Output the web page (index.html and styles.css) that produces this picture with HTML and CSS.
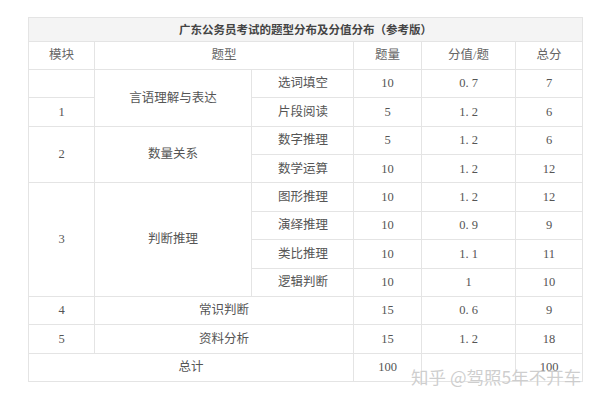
FILE: index.html
```html
<!DOCTYPE html>
<html lang="zh">
<head>
<meta charset="utf-8">
<link rel="stylesheet" href="styles.css">
</head>
<body>
<div class="wrap">
<table class="score">
  <colgroup>
    <col class="c1"><col class="c2"><col class="c3"><col class="c4"><col class="c5"><col class="c6">
  </colgroup>
  <tr class="title"><th colspan="6">广东公务员考试的题型分布及分值分布（参考版）</th></tr>
  <tr class="head"><td>模块</td><td colspan="2">题型</td><td>题量</td><td>分值/题</td><td>总分</td></tr>
  <tr><td></td><td rowspan="2">言语理解与表达</td><td class="left">选词填空</td><td>10</td><td>0. 7</td><td>7</td></tr>
  <tr><td>1</td><td class="left">片段阅读</td><td>5</td><td>1. 2</td><td>6</td></tr>
  <tr><td rowspan="2">2</td><td rowspan="2">数量关系</td><td class="left">数字推理</td><td>5</td><td>1. 2</td><td>6</td></tr>
  <tr><td class="left">数学运算</td><td>10</td><td>1. 2</td><td>12</td></tr>
  <tr><td rowspan="4">3</td><td rowspan="4">判断推理</td><td class="left">图形推理</td><td>10</td><td>1. 2</td><td>12</td></tr>
  <tr><td class="left">演绎推理</td><td>10</td><td>0. 9</td><td>9</td></tr>
  <tr><td class="left">类比推理</td><td>10</td><td>1. 1</td><td>11</td></tr>
  <tr><td class="left">逻辑判断</td><td>10</td><td>1</td><td>10</td></tr>
  <tr><td>4</td><td colspan="2">常识判断</td><td>15</td><td>0. 6</td><td>9</td></tr>
  <tr><td>5</td><td colspan="2">资料分析</td><td>15</td><td>1. 2</td><td>18</td></tr>
  <tr><td colspan="3">总计</td><td>100</td><td></td><td>100</td></tr>
</table>
<div class="mark">知乎 @驾照5年不开车</div>
</div>
</body>
</html>
```
FILE: styles.css
```css
html, body {
  margin: 0;
  padding: 0;
  background: #fff;
}
.wrap {
  position: relative;
  padding: 17px 0 0 28px;
  height: 381px;
}
.score {
  border-collapse: collapse;
  table-layout: fixed;
  width: 554px;
  font-family: "Liberation Serif", "Noto Sans CJK SC", serif;
  font-size: 12.5px;
  color: #555;
}
.c1 { width: 66px; }
.c2 { width: 157px; }
.c3 { width: 102px; }
.c4 { width: 68px; }
.c5 { width: 94px; }
.c6 { width: 67px; }
.score td, .score th {
  border: 1px solid #e4e4e4;
  text-align: center;
  padding: 0;
  height: 27.36px;
  line-height: 1;
}
.score .title th {
  height: 23px;
  background: #f4f4f4;
  font-family: "Noto Sans CJK SC", sans-serif;
  font-size: 11.5px;
  font-weight: bold;
  color: #444;
}
.score .head td {
  height: 27px;
  color: #666;
}
.score td.left {
  text-align: left;
  padding-left: 26px;
}
.mark {
  position: absolute;
  left: 411px;
  top: 364px;
  font-family: "Noto Sans CJK SC", sans-serif;
  font-size: 17.5px;
  color: rgba(190, 190, 190, 0.75);
  white-space: nowrap;
  text-shadow: 0 0 1px rgba(255,255,255,0.8);
}
```
